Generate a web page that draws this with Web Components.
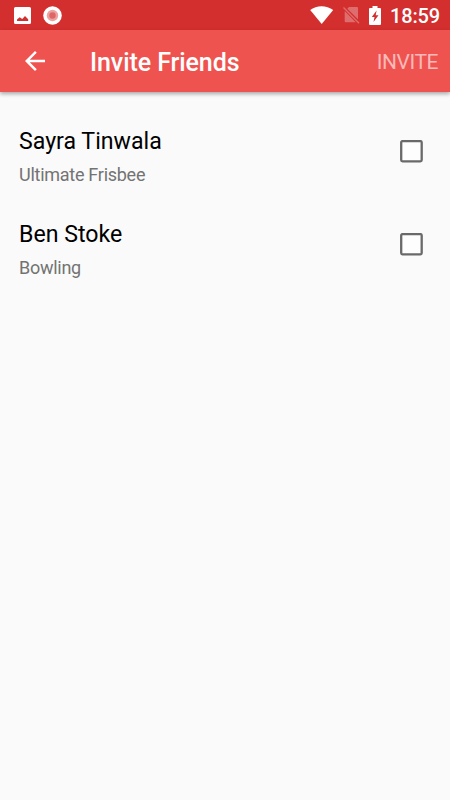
<!DOCTYPE html>
<html lang="en"><head><meta charset="utf-8"><title>Invite Friends</title>
<style>body{margin:0;background:#fafafa;font-family:Roboto,sans-serif}</style></head>
<body><invite-screen></invite-screen>
<script>
class StatusBar extends HTMLElement{constructor(){super();this.attachShadow({mode:'open'}).innerHTML=`
<style>:host{display:flex;height:30px;background:#d32f2f;color:#fff;align-items:center;box-sizing:border-box;padding:0 10px 0 14px}
svg{display:block;flex:none}.sp{flex:1}.t{font-size:20px;letter-spacing:-.15px;line-height:30px;padding-top:2px;font-weight:500;white-space:nowrap}</style>
<svg width="17" height="17" viewBox="0 0 17 17"><path fill="#fff" fill-rule="evenodd" d="M1.500 0h14A1.500 1.500 0 0 1 17 1.500v14a1.500 1.500 0 0 1-1.500 1.500h-14A1.500 1.500 0 0 1 0 15.500v-14A1.500 1.500 0 0 1 1.500 0zM3 14h11.200v-1.700L11 9 8.300 12 5.700 10.200 3 12.500z"/></svg>
<svg style="margin-left:12px" width="19" height="19" viewBox="0 0 19 19"><circle cx="9.500" cy="9.500" r="9.300" fill="#fff"/><circle cx="9.500" cy="9.500" r="5.700" fill="#eda1a1"/><circle cx="9.500" cy="9.500" r="3.200" fill="#df6666"/></svg>
<span class="sp"></span>
<svg width="24" height="18" viewBox="0 0 24 18"><path fill="#fff" d="M11.700 18 .200 4C6.500-1.100 16.500-1.100 23.200 4z"/></svg>
<svg style="margin-left:9px" width="17" height="18" viewBox="0 0 17 18"><path fill="#e06d6d" d="M6 1h8a1 1 0 0 1 1 1v11.300L4.300 2.700zM1.700 5l11 11.200H2.700a1 1 0 0 1-1-1z"/><path d="M.500 1.500 16 17.200" stroke="#e06d6d" stroke-width="1.300"/></svg>
<svg style="margin:0 9px 0 9px" width="12" height="19" viewBox="0 0 12 19"><path fill="#fff" fill-rule="evenodd" d="M3.500 0h5v2H11a1 1 0 0 1 1 1v15a1 1 0 0 1-1 1H1a1 1 0 0 1-1-1V3a1 1 0 0 1 1-1h2.500zM7.600 4.500 2.800 11h2.700L4.500 16l5-6.800H6.700z"/></svg>
<span class="t">18:59</span>`}}
customElements.define('status-bar',StatusBar);
class AppBar extends HTMLElement{constructor(){super();this.attachShadow({mode:'open'}).innerHTML=`
<style>:host{display:flex;height:62px;background:#ef5350;color:#fff;align-items:center;box-sizing:border-box;padding:1px 12px 0 25px;box-shadow:0 2px 4px #0005}
svg{display:block;margin:-1px 45px 0 0}.h{flex:1;font-size:25px;letter-spacing:-.08px;font-weight:500;padding-top:1px}.a{font-size:21px;letter-spacing:-.45px;color:#fabab9}</style>
<svg width="20" height="20" viewBox="4 4 16 16"><path fill="#fff" d="M20 11H7.830l5.590-5.590L12 4l-8 8 8 8 1.410-1.410L7.830 13H20z"/></svg>
<span class="h"><slot></slot></span><span class="a"><slot name="action"></slot></span>`}}
customElements.define('app-bar',AppBar);
class FriendRow extends HTMLElement{constructor(){super();this.attachShadow({mode:'open'}).innerHTML=`
<style>:host{display:flex;height:93px;box-sizing:border-box;padding:19px 27px 0 19px;justify-content:space-between}
.n{font-size:23.150px;line-height:30px;color:#000}.s{font-size:18px;letter-spacing:-.27px;line-height:26px;margin-top:5px;color:#737373}
svg{display:block;margin-top:13px}</style>
<div><div class="n"><slot></slot></div><div class="s"><slot name="sport"></slot></div></div>
<svg width="23" height="23" viewBox="0 0 23 23" role="checkbox" aria-checked="false"><rect x="1.200" y="1.100" width="20.500" height="20.200" rx="1.300" fill="#fff" fill-opacity=".6" stroke="#696969" stroke-width="2.300"/></svg>`}}
customElements.define('friend-row',FriendRow);
class InviteScreen extends HTMLElement{constructor(){super();this.attachShadow({mode:'open'}).innerHTML=`
<style>:host{display:block;height:800px;background:#fafafa}main{padding-top:16px}</style>
<status-bar></status-bar><app-bar>Invite Friends<span slot="action">INVITE</span></app-bar>
<main><friend-row>Sayra Tinwala<span slot="sport">Ultimate Frisbee</span></friend-row><friend-row>Ben Stoke<span slot="sport">Bowling</span></friend-row></main>`}}
customElements.define('invite-screen',InviteScreen);
</script></body></html>
